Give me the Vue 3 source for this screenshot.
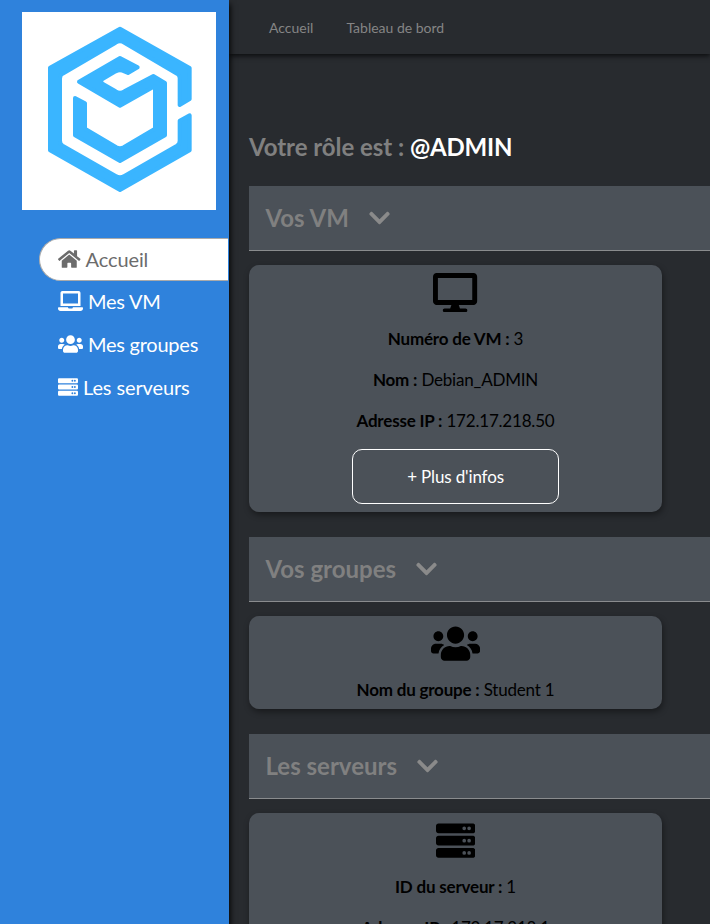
<script setup>
const server = [32, 192, 352]
  .map((y) => `M480 ${y + 128}H32c-17.7 0-32-14.300-32-32V${y + 32}c0-17.700 14.300-32 32-32h448c17.700 0 32 14.300 32 32v64c0 17.700-14.300 32-32 32zm-48-88a24 24 0 1 0 0 48 24 24 0 0 0 0-48zm-64 0a24 24 0 1 0 0 48 24 24 0 0 0 0-48z`)
  .join('')

const icons = {
  home: { w: 576, d: 'M280.370 148.260L96 300.110V464a16 16 0 0 0 16 16l112.060-.290a16 16 0 0 0 15.920-16V368a16 16 0 0 1 16-16h64a16 16 0 0 1 16 16v95.640a16 16 0 0 0 16 16.050L464 480a16 16 0 0 0 16-16V300L295.670 148.260a12.190 12.190 0 0 0-15.300 0zM571.600 251.470L488 182.560V44.050a12 12 0 0 0-12-12h-56a12 12 0 0 0-12 12v72.610L318.470 43a48 48 0 0 0-61 0L4.340 251.470a12 12 0 0 0-1.600 16.900l25.500 31A12 12 0 0 0 45.150 301l235.220-193.740a12.190 12.190 0 0 1 15.300 0L530.900 301a12 12 0 0 0 16.900-1.600l25.500-31a12 12 0 0 0-1.700-16.930z' },
  laptop: { w: 640, d: 'M624 416H381.540c-.740 19.810-14.710 32-32.740 32H288c-18.690 0-33.020-17.470-32.770-32H16c-8.800 0-16 7.200-16 16v16c0 35.200 28.800 64 64 64h512c35.200 0 64-28.800 64-64v-16c0-8.800-7.200-16-16-16zM576 48c0-26.400-21.600-48-48-48H112C85.600 0 64 21.600 64 48v336h512V48zm-64 272H128V64h384v256z' },
  users: { w: 640, d: 'M96 224c35.300 0 64-28.700 64-64s-28.700-64-64-64-64 28.700-64 64 28.700 64 64 64zm448 0c35.300 0 64-28.700 64-64s-28.700-64-64-64-64 28.700-64 64 28.700 64 64 64zm32 32h-64c-17.600 0-33.500 7.100-45.100 18.600 40.300 22.100 68.900 62 75.100 109.400h66c17.700 0 32-14.300 32-32v-32c0-35.300-28.700-64-64-64zm-256 0c61.900 0 112-50.100 112-112S381.900 32 320 32 208 82.100 208 144s50.100 112 112 112zm76.800 32h-8.300c-20.800 10-43.900 16-68.500 16s-47.600-6-68.500-16h-8.300C179.600 288 128 339.600 128 403.200V432c0 26.500 21.500 48 48 48h288c26.500 0 48-21.500 48-48v-28.800c0-63.600-51.600-115.200-115.200-115.200zm-223.700-13.400C161.500 263.100 145.600 256 128 256H64c-35.300 0-64 28.700-64 64v32c0 17.700 14.300 32 32 32h65.900c6.300-47.400 34.900-87.300 75.200-109.400z' },
  server: { w: 512, d: server },
  desktop: { w: 576, d: 'M528 0H48C21.500 0 0 21.500 0 48v320c0 26.500 21.500 48 48 48h192l-16 48h-72c-13.300 0-24 10.700-24 24s10.700 24 24 24h272c13.300 0 24-10.700 24-24s-10.700-24-24-24h-72l-16-48h192c26.500 0 48-21.500 48-48V48c0-26.500-21.500-48-48-48zm-16 352H64V64h448v288z' },
}

const menu = [
  { label: 'Accueil', icon: 'home', active: true },
  { label: 'Mes VM', icon: 'laptop' },
  { label: 'Mes groupes', icon: 'users' },
  { label: 'Les serveurs', icon: 'server' },
]

const sections = [
  {
    title: 'Vos VM',
    icon: 'desktop',
    rows: [
      ['Numéro de VM :', '3'],
      ['Nom :', 'Debian_ADMIN'],
      ['Adresse IP :', '172.17.218.50'],
    ],
    button: true,
  },
  { title: 'Vos groupes', icon: 'users', rows: [['Nom du groupe :', 'Student 1']] },
  {
    title: 'Les serveurs',
    icon: 'server',
    rows: [
      ['ID du serveur :', '1'],
      ['Adresse IP :', '172.17.218.1'],
    ],
    button: true,
  },
]
</script>

<template>
  <div class="page">
    <aside class="sidebar">
      <div class="logo">
        <svg viewBox="0 0 582 594">
          <g fill="#3ab5ff" stroke="#3ab5ff" stroke-width="12" stroke-linejoin="round">
            <path d="M294 50L503 168V261L473 279V198Q473 190 465 185L307 92Q294 84 281 92L122 185Q114 190 114 200V386Q114 396 122 401L281 492Q294 500 307 492L465 401Q473 396 473 386V326L503 310V415L294 534L84 415V167Z" />
            <path d="M294 138L347 166L318 183L307 178Q294 172 281 178L243 200Q232 208 243 216L281 238Q294 246 307 238L394 192L429 213V370L294 447L159 370V258L189 274V350L283 406Q294 412 305 406L399 350V222L294 281L171 209Z" />
          </g>
        </svg>
      </div>
      <nav class="menu">
        <a v-for="m in menu" :key="m.label" class="item" :class="{ active: m.active }">
          <svg class="icon" :viewBox="`0 0 ${icons[m.icon].w} 512`"><path :d="icons[m.icon].d" /></svg>
          <span>{{ m.label }}</span>
        </a>
      </nav>
    </aside>
    <div class="content">
      <header class="topbar">
        <a>Accueil</a>
        <a>Tableau de bord</a>
      </header>
      <main class="main">
        <h2 class="role">Votre rôle est : <span>@ADMIN</span></h2>
        <section v-for="s in sections" :key="s.title" class="section">
          <h2 class="section-title">
            <span>{{ s.title }}</span>
            <svg class="chevron" viewBox="0 0 448 512"><path d="M207.029 381.476L12.686 187.132c-9.373-9.373-9.373-24.569 0-33.941l22.667-22.667c9.357-9.357 24.522-9.375 33.901-.04L224 284.505l154.745-154.021c9.379-9.335 24.544-9.317 33.901.04l22.667 22.667c9.373 9.373 9.373 24.569 0 33.941L240.971 381.476c-9.373 9.372-24.569 9.372-33.942 0z" /></svg>
          </h2>
          <div class="card">
            <svg class="card-icon" :viewBox="`0 0 ${icons[s.icon].w} 512`"><path :d="icons[s.icon].d" /></svg>
            <p v-for="r in s.rows" :key="r[0]"><b>{{ r[0] }}</b> {{ r[1] }}</p>
            <button v-if="s.button" class="more">+ Plus d'infos</button>
          </div>
        </section>
      </main>
    </div>
  </div>
</template>

<style>
html,
body {
  overflow: hidden;
  background: #282b2f;
}
</style>

<style scoped>
.page {
  display: flex;
  height: 924px;
  overflow: hidden;
  font-family: Lato, "Liberation Sans", sans-serif;
  background: #282b2f;
}
.sidebar {
  position: relative;
  z-index: 2;
  flex: none;
  box-sizing: border-box;
  width: 229px;
  padding-top: 12px;
  background: #2f82dc;
  box-shadow: 1px 4px 6px #000;
}
.logo {
  width: 194px;
  height: 198px;
  margin-left: 22px;
  background: #fff;
}
.logo svg {
  display: block;
  width: 100%;
  height: 100%;
}
.menu {
  display: flex;
  flex-direction: column;
  margin: 28px 1px 0 39px;
}
.item {
  display: flex;
  align-items: center;
  gap: 5px;
  box-sizing: border-box;
  height: 43px;
  padding: 0 0 3px 19px;
  font-size: 20px;
  letter-spacing: -0.25px;
  color: #fff;
}
.item:last-child {
  letter-spacing: -0.12px;
}
.item.active {
  border: 1px solid #aaa;
  border-right: 0;
  border-radius: 22px 0 0 22px;
  padding: 0 0 1px 18px;
  letter-spacing: -0.1px;
  color: #6c6c6c;
  background: #fff;
}
.icon {
  height: 20px;
  fill: currentColor;
}
.content {
  flex: 1;
  min-width: 0;
}
.topbar {
  display: flex;
  gap: 33px;
  box-sizing: border-box;
  height: 54px;
  padding: 19px 0 0 40px;
  font-size: 14px;
  line-height: 18px;
  color: #858585;
  box-shadow: 0 2px 5px #0c0d0f;
}
.main {
  padding: 78px 0 0 20px;
}
.role {
  margin: 0 0 24px;
  font-size: 24px;
  line-height: 30px;
  letter-spacing: -0.04px;
  color: #808080;
}
.role span {
  letter-spacing: -0.2px;
  color: #fff;
}
.section {
  margin-bottom: 25px;
}
.section-title {
  display: flex;
  align-items: center;
  gap: 20px;
  height: 64px;
  margin: 0 0 14px;
  padding-left: 16.5px;
  border-bottom: 1px solid #8a8c8e;
  font-size: 24px;
  color: #808080;
  background: #4b5158;
}
.section-title span {
  padding-bottom: 2px;
}
.chevron {
  width: 21px;
  height: 24px;
  fill: #8a8a8a;
}
.card {
  display: flex;
  flex-direction: column;
  align-items: center;
  box-sizing: border-box;
  width: 413px;
  padding: 8px 0;
  border-radius: 10px;
  background: #4b5158;
  box-shadow: 1px 3px 6px rgba(0, 0, 0, 0.4);
}
.card-icon {
  height: 39.25px;
  margin-bottom: 15.75px;
  fill: #000;
}
.card p {
  margin: 0;
  font-size: 17px;
  line-height: 21px;
  letter-spacing: -0.2px;
  color: #000;
}
.card p + p {
  margin-top: 20px;
}
.card p:last-child {
  margin-bottom: 1px;
}
.more {
  box-sizing: border-box;
  width: 207px;
  height: 55px;
  margin-top: 18px;
  border: 1px solid #fff;
  border-radius: 10px;
  font: 17px Lato, sans-serif;
  letter-spacing: -0.14px;
  color: #fff;
  background: transparent;
}
</style>
